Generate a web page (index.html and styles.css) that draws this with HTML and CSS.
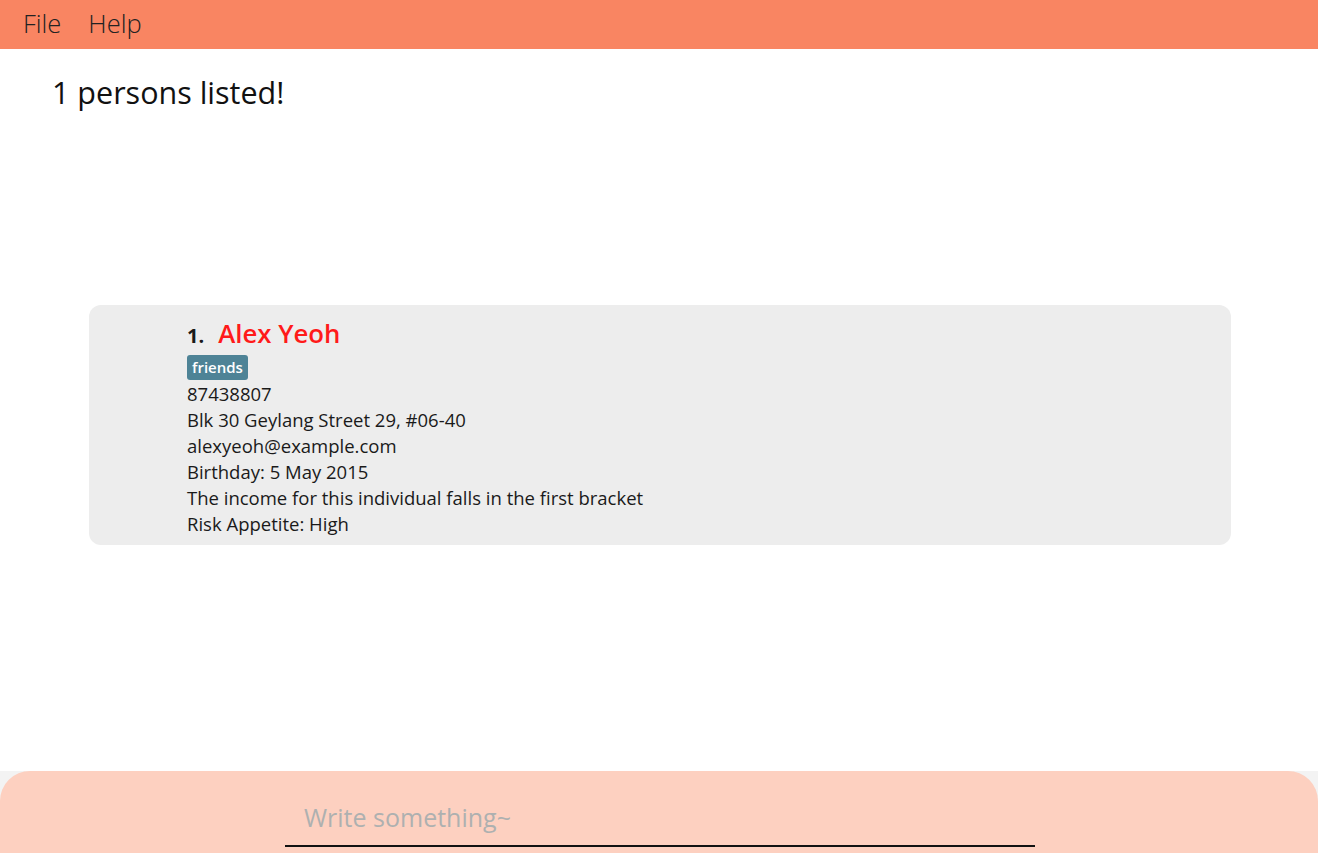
FILE: index.html
```html
<!DOCTYPE html>
<html>
<head>
<meta charset="utf-8">
<link rel="stylesheet" href="styles.css">
</head>
<body>
<div class="app">
  <div class="menubar">
    <span class="menu-item">File</span>
    <span class="menu-item">Help</span>
  </div>
  <div class="main">
    <div class="status">1 persons listed!</div>
    <div class="list">
      <div class="card">
        <div class="name-row"><span class="index">1.</span><span class="name">Alex Yeoh</span></div>
        <div class="tags"><span class="tag">friends</span></div>
        <div class="line">87438807</div>
        <div class="line">Blk 30 Geylang Street 29, #06-40</div>
        <div class="line">alexyeoh@example.com</div>
        <div class="line">Birthday: 5 May 2015</div>
        <div class="line">The income for this individual falls in the first bracket</div>
        <div class="line">Risk Appetite: High</div>
      </div>
    </div>
  </div>
  <div class="bottom">
    <div class="command">
      <input class="command-input" type="text" placeholder="Write something~">
    </div>
  </div>
</div>
</body>
</html>
```
FILE: styles.css
```css
html, body {
  margin: 0;
  padding: 0;
  height: 100%;
}
body {
  font-family: "Open Sans", "Noto Sans", sans-serif;
  color: #1a1a1a;
  background: #ffffff;
}
.app {
  display: flex;
  flex-direction: column;
  height: 853px;
  overflow: hidden;
}
.menubar {
  height: 49px;
  background: #f98562;
  display: flex;
  align-items: center;
  padding-left: 23px;
  gap: 27px;
}
.menu-item {
  font-size: 25.5px;
  font-weight: 300;
  color: #222;
  line-height: 30px;
  margin-top: -3px;
}
.main {
  flex: 1;
  display: flex;
  flex-direction: column;
}
.status {
  padding: 23px 0 0 52px;
  font-size: 30.5px;
  line-height: 40px;
  color: #111;
}
.list {
  padding-top: 193px;
}
.card {
  margin-left: 89px;
  width: 1142px;
  box-sizing: border-box;
  background: #ededed;
  border-radius: 12px;
  padding: 13px 0 8px 98px;
}
.name-row {
  display: flex;
  align-items: baseline;
  height: 30px;
  line-height: 30px;
  margin-bottom: 7px;
}
.index {
  font-size: 20px;
  font-weight: 700;
  margin-right: 14px;
}
.name {
  font-size: 25.8px;
  font-weight: 600;
  color: #ff1a1a;
}
.tags {
  display: flex;
  height: 26px;
}
.tag {
  background: #4e8396;
  color: #fff;
  font-size: 15px;
  font-weight: 600;
  line-height: 25px;
  height: 25px;
  padding: 0 5px;
  border-radius: 3px;
}
.line {
  font-size: 18.5px;
  line-height: 26px;
}
.bottom {
  height: 82px;
  background: #f3f3f3;
}
.command {
  height: 82px;
  background: #fdd0c0;
  border-radius: 30px 30px 0 0;
  padding-left: 285px;
  box-sizing: border-box;
  padding-top: 30px;
}
.command-input {
  width: 750px;
  height: 46px;
  box-sizing: border-box;
  border: none;
  border-bottom: 2px solid #111;
  background: transparent;
  outline: none;
  font-family: "Open Sans", "Noto Sans", sans-serif;
  font-size: 25px;
  padding: 0 0 13px 19px;
  color: #333;
}
.command-input::placeholder {
  color: #aeb0b0;
}
```
